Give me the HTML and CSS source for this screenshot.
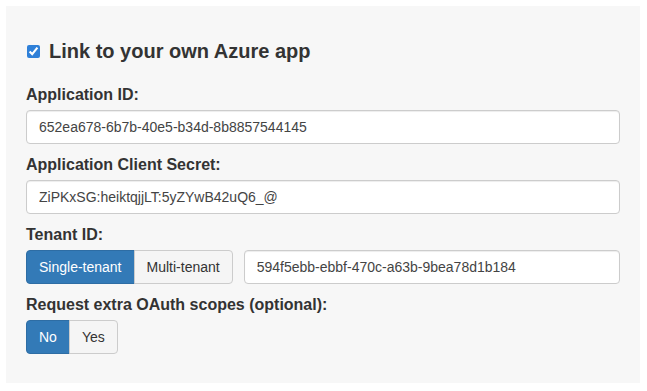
FILE: index.html
```
<html>
<head>
    <title>Azure app</title>
    <link rel="stylesheet" href="styles.css">
</head>
<body>
    <div class="panel">
        <h3 class="title">
            <input type="checkbox" id="ownApp" checked>
            <label for="ownApp">Link to your own Azure app</label>
        </h3>
        <div class="form-group">
            <label for="appId">Application ID:</label>
            <input type="text" id="appId" class="form-control" value="652ea678-6b7b-40e5-b34d-8b8857544145">
        </div>
        <div class="form-group">
            <label for="secret">Application Client Secret:</label>
            <input type="text" id="secret" class="form-control" value="ZiPKxSG:heiktqjjLT:5yZYwB42uQ6_@">
        </div>
        <div class="form-group">
            <label>Tenant ID:</label>
            <div class="row">
                <div class="btn-group">
                    <button class="btn active">Single-tenant</button>
                    <button class="btn">Multi-tenant</button>
                </div>
                <input type="text" id="tenant" class="form-control" value="594f5ebb-ebbf-470c-a63b-9bea78d1b184">
            </div>
        </div>
        <div class="form-group">
            <label>Request extra OAuth scopes (optional):</label>
            <div class="btn-group">
                <button class="btn active">No</button>
                <button class="btn">Yes</button>
            </div>
        </div>
    </div>
</body>
</html>
```

FILE: styles.css
```
body {
    margin: 0;
    font-family: "Liberation Sans", Arial, sans-serif;
    font-size: 14px;
    color: #333;
    background: #fff;
}
.panel {
    background: #f7f7f7;
    margin: 6px 7px 0 6px;
    padding: 34px 20px 29px 20px;
}
.title {
    display: flex;
    align-items: center;
    margin: 0 0 23px 0;
    font-size: 20px;
    line-height: 22px;
    font-weight: bold;
    color: #333;
}
.title input {
    width: 13px;
    height: 13px;
    margin: 0 9px 0 1px;
    accent-color: #2f80d8;
}
.form-group {
    margin-bottom: 11px;
}
.form-group:last-child {
    margin-bottom: 0;
}
.form-group > label {
    display: block;
    font-size: 16px;
    font-weight: bold;
    line-height: 20px;
    margin-bottom: 5px;
}
.form-control {
    display: block;
    box-sizing: border-box;
    width: 100%;
    height: 34px;
    padding: 6px 12px;
    font-family: inherit;
    font-size: 14px;
    color: #444;
    background: #fff;
    border: 1px solid #ccc;
    border-radius: 4px;
    box-shadow: inset 0 1px 1px rgba(0, 0, 0, 0.075);
}
.row {
    display: flex;
    gap: 11px;
}
.row .form-control {
    flex: 1;
}
.btn-group {
    display: flex;
}
.btn {
    height: 34px;
    padding: 6px 12px;
    font-family: inherit;
    font-size: 14px;
    line-height: 20px;
    color: #333;
    background: #f5f5f5;
    border: 1px solid #ccc;
    border-radius: 0;
    cursor: pointer;
}
.btn:first-child {
    border-radius: 4px 0 0 4px;
}
.btn:last-child {
    border-radius: 0 4px 4px 0;
    margin-left: -1px;
}
.btn.active {
    background: #337ab7;
    border-color: #2e6da4;
    color: #fff;
}
```
